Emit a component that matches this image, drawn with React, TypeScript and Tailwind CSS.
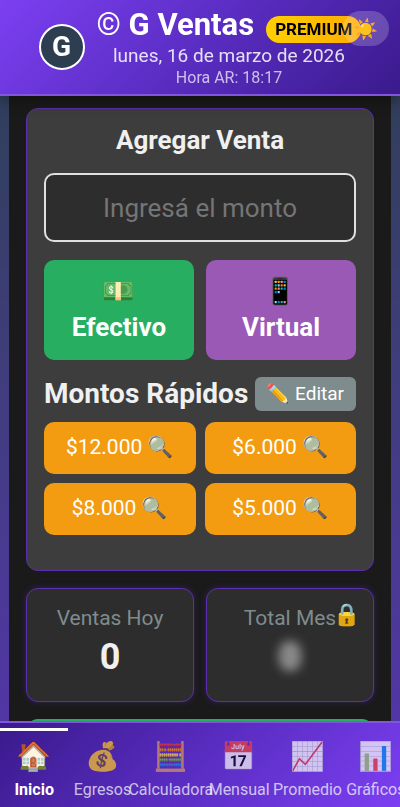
import React from 'react';

const quickAmounts = ['$12.000', '$6.000', '$8.000', '$5.000'];

const tabs = [
  { icon: '🏠', label: 'Inicio' },
  { icon: '💰', label: 'Egresos' },
  { icon: '🧮', label: 'Calculadora' },
  { icon: '📅', label: 'Mensual' },
  { icon: '📈', label: 'Promedio' },
  { icon: '📊', label: 'Gráficos' },
];

function Header() {
  return (
    <header className="relative z-10 flex shrink-0 items-center justify-center gap-3 border-b-2 border-[#8156dc] bg-linear-135 from-[#7c3ff2] via-[#5a2dc2] to-[#3a1a8c] pt-[6px] pb-[6px] shadow-[0_4px_15px_rgba(0,0,0,0.4)]">
      <div className="flex size-[46px] shrink-0 items-center justify-center rounded-full border-2 border-white bg-[#2c3e50] text-[28px] font-bold text-white">
        G
      </div>
      <div className="flex flex-col items-center">
        <h1 className="flex items-end gap-3 text-[31px] leading-[37px] font-bold whitespace-nowrap text-white">
          <span>
            <span className="font-normal">©</span> G Ventas
          </span>
          <span className="rounded-full bg-linear-to-r from-[#ffd000] to-[#ffab00] px-[9px] text-[17px] leading-[27px] font-bold text-black">
            PREMIUM
          </span>
        </h1>
        <p className="text-[19px] leading-[25px] text-white/85">lunes, 16 de marzo de 2026</p>
        <p className="text-[16px] leading-5 text-white/70">Hora AR: 18:17</p>
      </div>
      <button
        aria-label="Cambiar tema"
        className="absolute top-[11px] right-[11px] h-[35px] w-[46px] rounded-full bg-white/20 text-[20px] leading-none"
      >
        ☀️
      </button>
    </header>
  );
}

function SaleCard() {
  return (
    <section className="rounded-xl border border-[#5b2fb0] bg-[#3d3d3d] px-[17px] pt-4 pb-[35px]">
      <h2 className="mb-[18px] text-center text-[26px] leading-[30px] font-bold">Agregar Venta</h2>
      <input
        aria-label="Monto"
        placeholder="Ingresá el monto"
        className="block h-[69px] w-full rounded-[10px] border-2 border-[#e0e0e0] bg-[#2d2d2d] text-center text-[26px] placeholder:text-[#757575]"
      />
      <div className="mt-[18px] grid grid-cols-2 gap-3">
        <button className="flex h-[100px] flex-col items-center justify-center rounded-[10px] bg-[#27ae60] pb-[2px] text-[26px] leading-9 font-bold text-white">
          <span>💵</span>
          <span>Efectivo</span>
        </button>
        <button className="flex h-[100px] flex-col items-center justify-center rounded-[10px] bg-[#9b59b6] pb-[2px] text-[26px] leading-9 font-bold text-white">
          <span>📱</span>
          <span>Virtual</span>
        </button>
      </div>
      <div className="mt-[17px] mb-[11px] flex items-center justify-between">
        <h3 className="text-[28px] leading-[34px] font-bold whitespace-nowrap">Montos Rápidos</h3>
        <button className="h-[34px] rounded-md bg-[#7f8c8d] px-3 text-[19px] whitespace-nowrap text-white">✏️ Editar</button>
      </div>
      <div className="grid grid-cols-2 gap-[9px]">
        {quickAmounts.map((a) => (
          <button key={a} className="h-[52px] rounded-[10px] bg-[#f39c12] text-[21px] text-white">
            {a} 🔍
          </button>
        ))}
      </div>
    </section>
  );
}

function Stats() {
  const card =
    'relative h-[114px] rounded-xl border border-[#5b2fb0] bg-[#2d2d2d] pt-[15px] text-center shadow-[0_0_6px_rgba(91,47,176,0.4)]';
  return (
    <section className="mt-[17px] grid grid-cols-2 gap-3">
      <div className={card}>
        <p className="text-[21px] leading-7 text-[#7f8c8d]">Ventas Hoy</p>
        <p className="mt-1 text-[36px] leading-[42px] font-bold">0</p>
      </div>
      <div className={card}>
        <p className="text-[21px] leading-7 text-[#7f8c8d]">Total Mes</p>
        <p className="mt-1 text-[36px] leading-[42px] font-bold blur-[6px]">0</p>
        <span className="absolute top-2 right-3 text-[22px] leading-9">🔒</span>
      </div>
    </section>
  );
}

function TabBar() {
  return (
    <nav className="relative z-10 shrink-0 overflow-hidden border-t-2 border-[#8156dc] bg-linear-135 from-[#3a1a8c] via-[#5a2dc2] to-[#7c3ff2]">
      <div className="flex h-[84px] min-w-[410px]">
        {tabs.map((t, i) => (
          <button
            key={t.label}
            className={
              i === 0
                ? 'relative flex w-0 flex-1 flex-col items-center pt-4 text-[16px] font-bold text-white'
                : 'flex w-0 flex-1 flex-col items-center pt-4 text-[16px] text-white opacity-70'
            }
          >
            {i === 0 && <span className="absolute inset-x-0 top-[5px] h-[3px] bg-white" />}
            <span className="text-[28px] leading-9 font-normal">{t.icon}</span>
            <span className="mt-[3px] leading-6">{t.label}</span>
          </button>
        ))}
      </div>
    </nav>
  );
}

export default function App() {
  return (
    <div className="flex h-screen flex-col bg-linear-to-b from-[#2c3e50] to-[#5732b0] font-[Roboto,'Noto_Color_Emoji',sans-serif] text-[#f0f0f0]">
      <Header />
      <main className="mx-[9px] min-h-0 flex-1 overflow-y-auto bg-[#1a1a1a] px-[17px] pt-3 [scrollbar-width:none]">
        <SaleCard />
        <Stats />
        <section className="mt-[17px] h-24 rounded-xl bg-[#27ae60]" />
      </main>
      <TabBar />
    </div>
  );
}
